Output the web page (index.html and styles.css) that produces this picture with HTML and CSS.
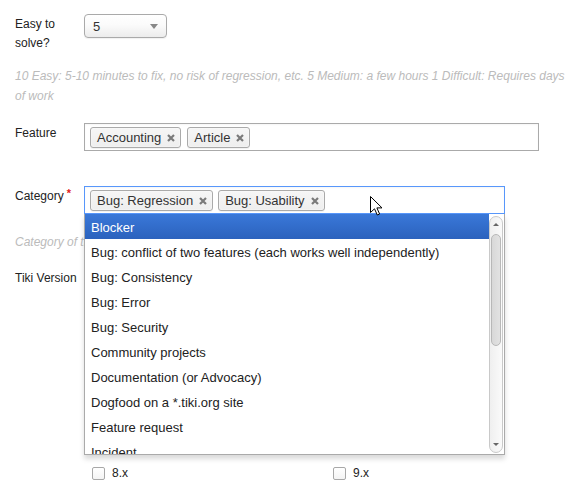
FILE: index.html
```html
<!DOCTYPE html>
<html>
<head>
<meta charset="utf-8">
<title>Tracker item</title>
<link rel="stylesheet" href="styles.css">
</head>
<body>
<form class="form">
  <div class="row">
    <label class="lbl lbl-easy">Easy to solve?</label>
    <div class="field">
      <div class="select"><span class="select-value">5</span><span class="caret"></span></div>
    </div>
  </div>
  <p class="help help-easy">10 Easy: 5-10 minutes to fix, no risk of regression, etc. 5 Medium: a few hours 1 Difficult: Requires days of work</p>

  <div class="row row-feature">
    <label class="lbl">Feature</label>
    <div class="field">
      <div class="tagbox tagbox-feature">
        <span class="tag">Accounting<svg class="x" viewBox="0 0 8 8"><path d="M1 1L7 7M7 1L1 7"/></svg></span>
        <span class="tag">Article<svg class="x" viewBox="0 0 8 8"><path d="M1 1L7 7M7 1L1 7"/></svg></span>
      </div>
    </div>
  </div>

  <div class="row row-category">
    <label class="lbl">Category<span class="req">*</span></label>
    <div class="field field-cat">
      <div class="tagbox tagbox-cat">
        <span class="tag">Bug: Regression<svg class="x" viewBox="0 0 8 8"><path d="M1 1L7 7M7 1L1 7"/></svg></span>
        <span class="tag">Bug: Usability<svg class="x" viewBox="0 0 8 8"><path d="M1 1L7 7M7 1L1 7"/></svg></span>
      </div>
      <div class="drop">
        <ul class="results">
          <li class="opt opt-hl">Blocker</li>
          <li class="opt">Bug: conflict of two features (each works well independently)</li>
          <li class="opt">Bug: Consistency</li>
          <li class="opt">Bug: Error</li>
          <li class="opt">Bug: Security</li>
          <li class="opt">Community projects</li>
          <li class="opt">Documentation (or Advocacy)</li>
          <li class="opt">Dogfood on a *.tiki.org site</li>
          <li class="opt">Feature request</li>
          <li class="opt">Incident</li>
        </ul>
        <div class="scrollbar">
          <div class="sb-btn"><span class="sb-up"></span></div>
          <div class="sb-thumb"></div>
          <div class="sb-rest"></div>
          <div class="sb-btn"><span class="sb-down"></span></div>
        </div>
      </div>
      <svg class="cursor" viewBox="0 0 13 20" width="13" height="20"><path d="M0.5 0.5L0.5 16.5L4.5 12.8L7.3 19L9.6 18L6.9 11.9L12 11.9Z" fill="#fff" stroke="#000" stroke-width="1" stroke-linejoin="round"/></svg>
    </div>
  </div>
  <p class="help help-cat">Category of the tracker item</p>

  <div class="row row-version">
    <label class="lbl">Tiki Version</label>
    <div class="field">
      <div class="checks">
        <label class="chk"><span class="box"></span>8.x</label>
        <label class="chk"><span class="box"></span>9.x</label>
      </div>
    </div>
  </div>
</form>
</body>
</html>
```

FILE: styles.css
```css
html, body {
  margin: 0;
  padding: 0;
  background: #fff;
}
body {
  font-family: "Liberation Sans", Arial, sans-serif;
  font-size: 12px;
  color: #222;
  overflow: hidden;
}
.form {
  padding: 14px 0 0 15px;
}
.row {
  display: flex;
  align-items: flex-start;
}
.lbl {
  flex: none;
  width: 69px;
  line-height: 19px;
  margin-top: 1px;
}
.lbl-easy {
  width: 50px;
  padding-right: 19px;
}
.field {
  flex: none;
}

/* select */
.select {
  box-sizing: border-box;
  width: 83px;
  height: 24px;
  border: 1px solid #aaa;
  border-radius: 4px;
  background: linear-gradient(#ffffff 0%, #fbfbfb 45%, #ececec 100%);
  box-shadow: 0 1px 1px rgba(0,0,0,0.06);
  display: flex;
  align-items: center;
  justify-content: space-between;
  padding: 0 8px 0 8px;
  font-size: 13px;
  color: #333;
}
.caret {
  width: 0;
  height: 0;
  border-left: 4px solid transparent;
  border-right: 4px solid transparent;
  border-top: 5px solid #888;
  margin-top: 1px;
}

/* help text */
.help {
  margin: 0;
  font-style: italic;
  color: #bbb;
  line-height: 20px;
}
.help-easy {
  margin-top: 13px;
  width: 560px;
}
.help-cat {
  margin-top: 18px;
}

/* tag boxes */
.row-feature {
  margin-top: 17px;
}
.row-category {
  margin-top: 35px;
}
.tagbox {
  box-sizing: border-box;
  height: 28px;
  border: 1px solid #aaa;
  background: #fff;
  padding: 3px 5px;
  display: flex;
  align-items: flex-start;
  gap: 6px;
  box-shadow: inset 0 1px 2px rgba(0,0,0,0.04);
}
.tagbox-feature {
  width: 455px;
}
.tagbox-cat {
  width: 421px;
  border-color: #5897fb;
  gap: 5px;
}
.tag {
  box-sizing: border-box;
  height: 21px;
  display: inline-flex;
  align-items: center;
  gap: 6px;
  padding: 0 5px 0 6px;
  border: 1px solid #aaa;
  border-radius: 3px;
  background: linear-gradient(#f6f6f6 0%, #eeeeee 100%);
  box-shadow: 0 0 2px #fff inset, 0 1px 0 rgba(0,0,0,0.05);
  font-size: 13px;
  color: #333;
  white-space: nowrap;
}
.x {
  width: 8px;
  height: 8px;
  flex: none;
}
.x path {
  stroke: #7a7a7a;
  stroke-width: 2.2;
  stroke-linecap: butt;
  fill: none;
}
.req {
  color: #e0231b;
  font-weight: bold;
  font-size: 11px;
  line-height: 0;
  margin-left: 3px;
  vertical-align: 3px;
}

/* dropdown */
.field-cat {
  position: relative;
}
.drop {
  position: absolute;
  top: 28px;
  left: 0;
  box-sizing: border-box;
  width: 421px;
  height: 241px;
  background: #fff;
  border: 1px solid #aaa;
  border-top: 0;
  box-shadow: 0 4px 5px rgba(0,0,0,0.15);
  display: flex;
  z-index: 10;
}
.results {
  list-style: none;
  margin: 0;
  padding: 0;
  flex: 1;
  overflow: hidden;
}
.opt {
  height: 24px;
  padding-top: 1px;
  line-height: 25px;
  padding-left: 6px;
  font-size: 13px;
  color: #222;
  white-space: nowrap;
}
.opt-hl {
  background: linear-gradient(#3a78d9 0%, #2b62bd 100%);
  color: #fff;
}
.scrollbar {
  flex: none;
  box-sizing: border-box;
  width: 14px;
  margin: 2px 1px 1px 0;
  border: 1px solid #c9c9c9;
  border-radius: 7px;
  background: linear-gradient(to right, #efefef, #fafafa);
  display: flex;
  flex-direction: column;
  align-items: center;
}
.sb-btn {
  height: 15px;
  width: 100%;
  display: flex;
  align-items: center;
  justify-content: center;
  flex: none;
}
.sb-up {
  width: 0;
  height: 0;
  border-left: 3px solid transparent;
  border-right: 3px solid transparent;
  border-bottom: 3px solid #666;
}
.sb-down {
  width: 0;
  height: 0;
  border-left: 3px solid transparent;
  border-right: 3px solid transparent;
  border-top: 3px solid #666;
}
.sb-thumb {
  box-sizing: border-box;
  flex: none;
  width: 10px;
  height: 112px;
  margin-top: 2px;
  border: 1px solid #b8b8b8;
  border-radius: 5px;
  background: linear-gradient(to right, #d8d8d8, #e2e2e2);
}
.sb-rest {
  flex: 1;
}
.cursor {
  position: absolute;
  left: 286px;
  top: 10px;
  z-index: 20;
}

/* version checkboxes */
.row-version {
  margin-top: 16px;
}
.checks {
  display: grid;
  grid-template-columns: 241px 160px;
  padding-left: 8px;
  margin-top: 198px;
}
.chk {
  display: flex;
  align-items: center;
  gap: 7px;
  height: 14px;
  color: #222;
}
.box {
  box-sizing: border-box;
  width: 13px;
  height: 13px;
  border: 1px solid #a8a8a8;
  border-radius: 2px;
  background: linear-gradient(#fff, #f4f4f4);
}
```
